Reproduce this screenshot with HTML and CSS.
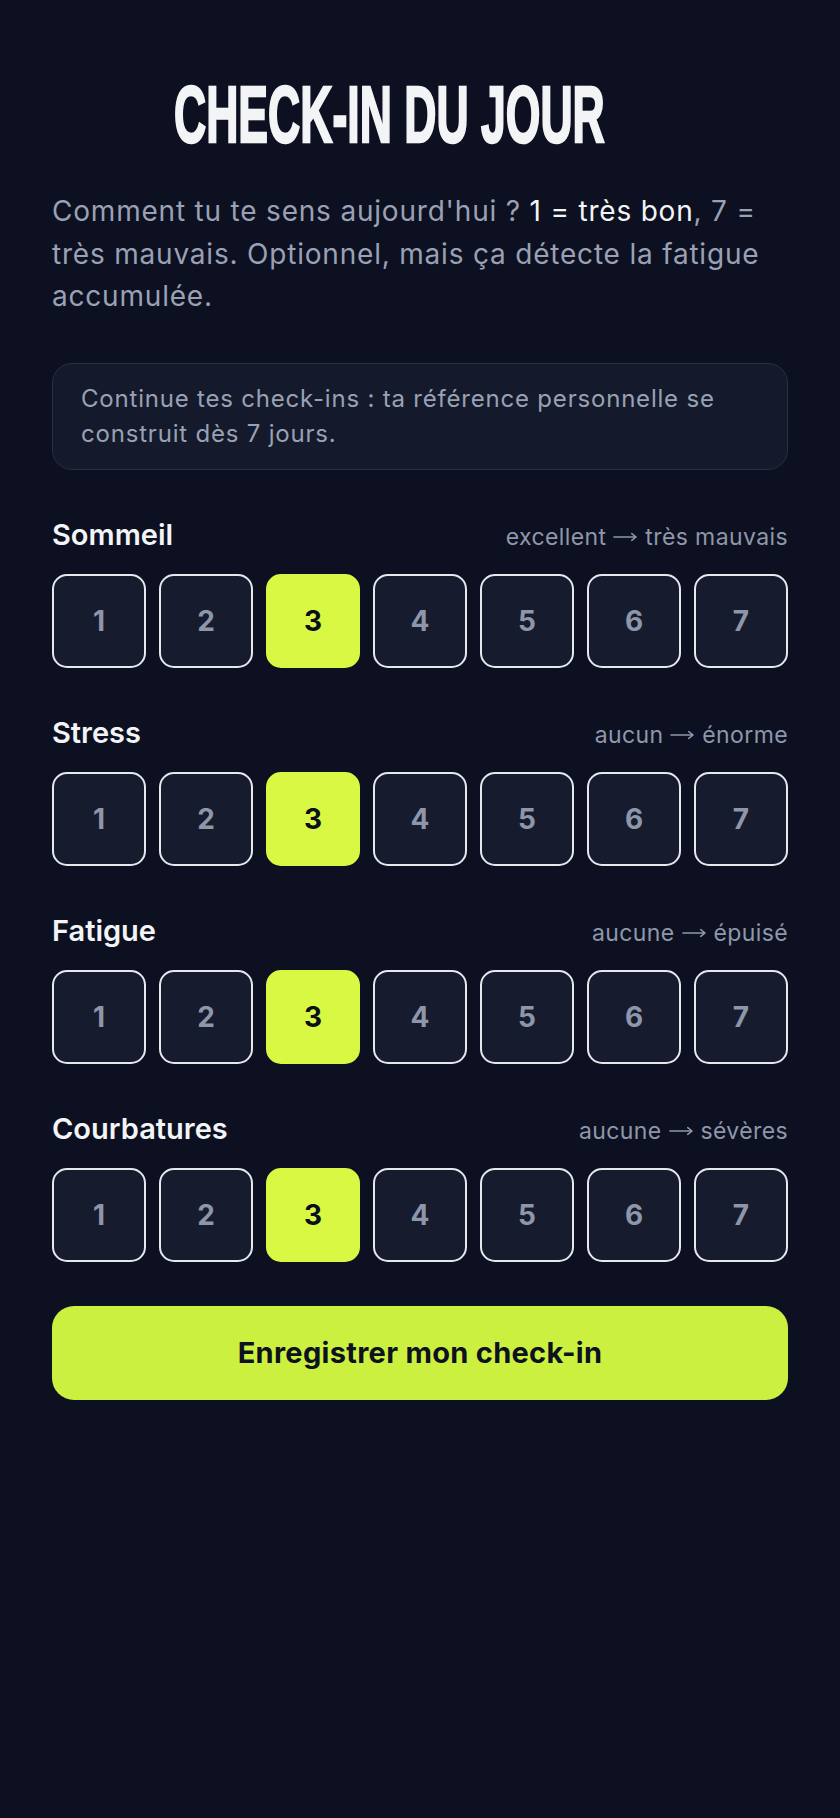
FILE: index.html
```html
<!DOCTYPE html>
<html lang="fr">
<head>
    <meta charset="UTF-8">
    <meta name="viewport" content="width=device-width, initial-scale=1.0">
    <title>Check-in du jour</title>
    <link rel="stylesheet" href="styles.css">
</head>
<body>
    <div class="screen">
        <h1 class="title">CHECK-IN DU JOUR</h1>
        <p class="intro"><span>Comment tu te sens aujourd'hui ?</span> <span class="hl">1 = très bon</span><span>, 7 =</span> <span>très mauvais. Optionnel, mais ça détecte la fatigue accumulée.</span></p>

        <div class="notice">Continue tes check-ins : ta référence personnelle se construit dès 7 jours.</div>

        <div class="metric">
            <div class="metric-head">
                <span class="metric-name">Sommeil</span>
                <span class="metric-range">excellent <svg class="arrow" viewBox="0 0 26 10"><path d="M1 5H24M19.5 1.5L24 5L19.5 8.5"/></svg> très mauvais</span>
            </div>
            <div class="scale">
                <button class="pick">1</button>
                <button class="pick">2</button>
                <button class="pick active">3</button>
                <button class="pick">4</button>
                <button class="pick">5</button>
                <button class="pick">6</button>
                <button class="pick">7</button>
            </div>
        </div>

        <div class="metric">
            <div class="metric-head">
                <span class="metric-name">Stress</span>
                <span class="metric-range">aucun <svg class="arrow" viewBox="0 0 26 10"><path d="M1 5H24M19.5 1.5L24 5L19.5 8.5"/></svg> énorme</span>
            </div>
            <div class="scale">
                <button class="pick">1</button>
                <button class="pick">2</button>
                <button class="pick active">3</button>
                <button class="pick">4</button>
                <button class="pick">5</button>
                <button class="pick">6</button>
                <button class="pick">7</button>
            </div>
        </div>

        <div class="metric">
            <div class="metric-head">
                <span class="metric-name">Fatigue</span>
                <span class="metric-range">aucune <svg class="arrow" viewBox="0 0 26 10"><path d="M1 5H24M19.5 1.5L24 5L19.5 8.5"/></svg> épuisé</span>
            </div>
            <div class="scale">
                <button class="pick">1</button>
                <button class="pick">2</button>
                <button class="pick active">3</button>
                <button class="pick">4</button>
                <button class="pick">5</button>
                <button class="pick">6</button>
                <button class="pick">7</button>
            </div>
        </div>

        <div class="metric">
            <div class="metric-head">
                <span class="metric-name">Courbatures</span>
                <span class="metric-range">aucune <svg class="arrow" viewBox="0 0 26 10"><path d="M1 5H24M19.5 1.5L24 5L19.5 8.5"/></svg> sévères</span>
            </div>
            <div class="scale">
                <button class="pick">1</button>
                <button class="pick">2</button>
                <button class="pick active">3</button>
                <button class="pick">4</button>
                <button class="pick">5</button>
                <button class="pick">6</button>
                <button class="pick">7</button>
            </div>
        </div>

        <button class="submit">Enregistrer mon check-in</button>
    </div>
</body>
</html>
```

FILE: styles.css
```css
html, body {
    margin: 0;
    padding: 0;
    background-color: #0c1021;
}
body {
    font-family: Inter, "Noto Sans", sans-serif;
    color: #f3f4f6;
    min-height: 1818px;
}
.screen {
    padding: 0 52px;
}
.title {
    margin: 75px 0 35px 122px;
    font-family: "Liberation Sans", Arial, sans-serif;
    font-weight: 700;
    font-size: 80px;
    line-height: 80px;
    white-space: nowrap;
    color: #f3f4f6;
    -webkit-text-stroke: 2.5px #f3f4f6;
    transform: scaleX(0.557);
    transform-origin: left center;
}
.intro {
    margin: 0 0 45px;
    font-size: 28px;
    line-height: 42.5px;
    letter-spacing: 0.8px;
    color: #9aa1b4;
}
.intro .hl {
    color: #f3f4f6;
}
.notice {
    padding: 17px 28px 18px;
    background-color: #141a2b;
    border: 1.5px solid #2a2f41;
    border-radius: 20px;
    font-size: 24px;
    line-height: 35px;
    letter-spacing: 0.8px;
    color: #9aa1b4;
}
.metric {
    margin-top: 47px;
}
.metric-head {
    display: flex;
    justify-content: space-between;
    align-items: baseline;
    height: 36px;
    margin-bottom: 21px;
}
.metric-name {
    font-size: 29px;
    line-height: 36px;
    font-weight: 600;
    color: #f3f4f6;
}
.metric-range {
    font-size: 23px;
    letter-spacing: 0.4px;
    color: #8f97aa;
}
.metric-range .arrow {
    width: 25px;
    height: 10px;
    vertical-align: 3px;
    fill: none;
    stroke: #8f97aa;
    stroke-width: 1.6;
    stroke-linecap: round;
    stroke-linejoin: round;
}
.scale {
    display: grid;
    grid-template-columns: repeat(7, 1fr);
    gap: 13px;
}
.pick {
    height: 94px;
    padding: 0;
    background-color: #171b2e;
    border: 2px solid #e6e8ee;
    border-radius: 15px;
    font-family: Inter, sans-serif;
    font-size: 28px;
    font-weight: 700;
    color: #8e96aa;
}
.pick.active {
    background-color: #d9f843;
    border-color: #d9f843;
    color: #0b0f1a;
}
.submit {
    display: block;
    width: 100%;
    height: 94px;
    margin-top: 44px;
    background-color: #ccf03f;
    border: none;
    border-radius: 22px;
    font-family: Inter, sans-serif;
    font-size: 29px;
    font-weight: 700;
    letter-spacing: 0.3px;
    color: #0d1120;
}
```
